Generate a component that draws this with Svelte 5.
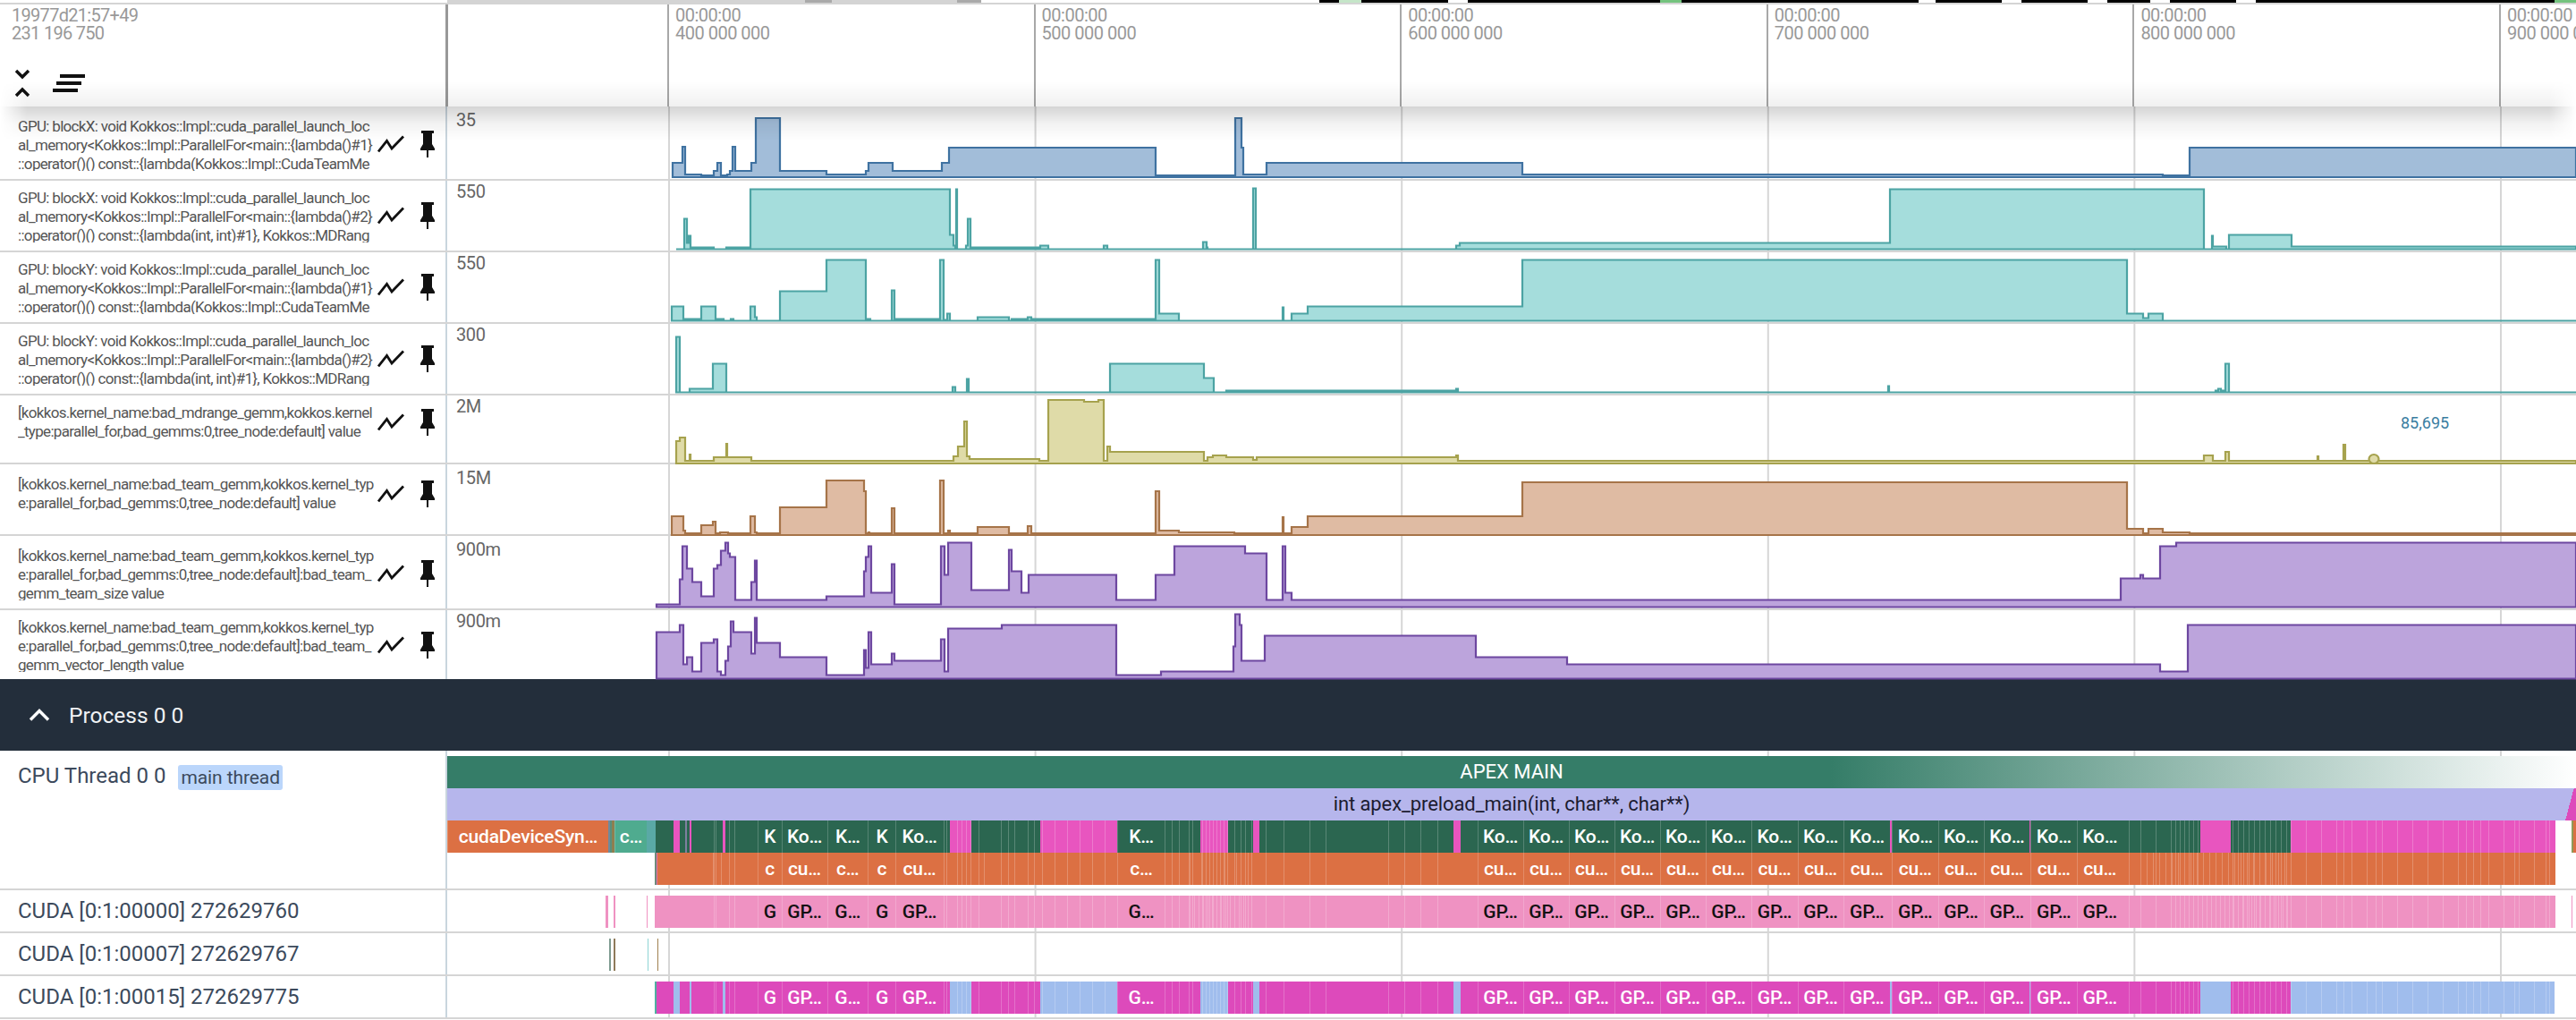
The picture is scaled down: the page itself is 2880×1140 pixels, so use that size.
<script>
	const O = '#dc7043';
	const GREEN = '#2b6650';
	const MAG = '#e855bf';
	const MAG2 = '#dd4abb';
	const PINK = '#ef92c2';
	const BLUE = '#a0bded';

	const charts = [
		{ cls: 'blue', top: 119, h: 83, base: 198, scale: '35', low: true,
			lines: ['GPU: blockX: void Kokkos::Impl::cuda_parallel_launch_loc', 'al_memory<Kokkos::Impl::ParallelFor<main::{lambda()#1}', '::operator()() const::{lambda(Kokkos::Impl::CudaTeamMe'],
			steps: [[752,16],[763,34],[766,3],[784,2],[798,7],[802,16],[806,2],[813,3],[816,7],[819,34],[822,7],[840,16],[845,66],[872,7],[924,3],[968,7],[971,16],[998,7],[1053,16],[1061,33],[1292,2],[1381,66],[1388,33],[1390,3],[1416,16],[1702,3],[2418,2],[2448,33],[2880,0]] },
		{ cls: 'teal', top: 202, h: 80, base: 278.5, scale: '550',
			lines: ['GPU: blockX: void Kokkos::Impl::cuda_parallel_launch_loc', 'al_memory<Kokkos::Impl::ParallelFor<main::{lambda()#2}', '::operator()() const::{lambda(int, int)#1}, Kokkos::MDRang'],
			steps: [[756,0],[765,34],[768,7],[770,15],[772,2],[798,0],[812,2],[839,67],[1062,16],[1066,4],[1068,0],[1069,67],[1070,0],[1080,4],[1082,34],[1085,2],[1163,4],[1172,0],[1234,4],[1238,0],[1345,8],[1349,2],[1350,0],[1401,68],[1404,0],[1628,4],[1632,7],[2113,67],[2464,0],[2473,15],[2474,3],[2489,0],[2492,16],[2562,3],[2880,0]] },
		{ cls: 'teal', top: 282, h: 80, base: 358.5, scale: '550',
			lines: ['GPU: blockY: void Kokkos::Impl::cuda_parallel_launch_loc', 'al_memory<Kokkos::Impl::ParallelFor<main::{lambda()#1}', '::operator()() const::{lambda(Kokkos::Impl::CudaTeamMe'],
			steps: [[751,16],[764,0],[765,2],[767,0],[768,2],[784,16],[800,2],[809,0],[817,2],[820,0],[839,16],[844,4],[846,0],[872,33],[924,68],[968,2],[973,0],[997,34],[1000,2],[1051,68],[1055,1],[1059,8],[1062,0],[1093,4],[1128,0],[1131,2],[1149,4],[1153,2],[1292,68],[1296,8],[1318,0],[1434,15],[1435,0],[1444,8],[1462,16],[1702,68],[2378,8],[2396,3],[2402,8],[2418,0],[2880,0]] },
		{ cls: 'teal', top: 362, h: 80, base: 438.5, scale: '300',
			lines: ['GPU: blockY: void Kokkos::Impl::cuda_parallel_launch_loc', 'al_memory<Kokkos::Impl::ParallelFor<main::{lambda()#2}', '::operator()() const::{lambda(int, int)#1}, Kokkos::MDRang'],
			steps: [[756,62],[760,0],[771,4],[797,32],[812,0],[1065,6],[1068,0],[1081,15],[1083,0],[1241,32],[1346,16],[1357,0],[1371,2],[1628,4],[1630,0],[2111,7],[2112,0],[2477,2],[2480,4],[2483,2],[2488,32],[2492,0],[2880,0]] },
		{ cls: 'olive', top: 442, h: 77, base: 518, scale: '2M',
			lines: ['[kokkos.kernel_name:bad_mdrange_gemm,kokkos.kernel', '_type:parallel_for,bad_gemms:0,tree_node:default] value'],
			steps: [[756,25],[760,29],[766,3],[771,10],[772,3],[798,7],[812,22],[813,7],[840,3],[1066,8],[1071,19],[1078,47],[1081,8],[1084,5],[1162,3],[1172,71],[1212,69],[1228,71],[1234,3],[1238,19],[1241,13],[1346,3],[1350,7],[1356,9],[1371,7],[1401,4],[1405,7],[1628,9],[1630,3],[2464,9],[2474,3],[2488,13],[2492,3],[2591,8],[2592,3],[2620,21],[2622,3],[2880,0]] },
		{ cls: 'brown', top: 519, h: 80, base: 598, scale: '15M', low: true,
			lines: ['[kokkos.kernel_name:bad_team_gemm,kokkos.kernel_typ', 'e:parallel_for,bad_gemms:0,tree_node:default] value'],
			steps: [[751,21],[764,5],[766,2],[784,11],[797,15],[800,2],[805,3],[814,2],[839,21],[844,3],[846,2],[872,31],[924,61],[966,49],[968,2],[971,3],[972,2],[997,30],[1000,2],[1051,61],[1055,2],[1060,5],[1062,2],[1093,9],[1128,2],[1149,10],[1153,2],[1292,49],[1296,5],[1318,3],[1380,2],[1434,20],[1435,2],[1444,9],[1462,21],[1702,59],[2378,7],[2396,2],[2402,7],[2418,3],[2448,2],[2880,0]] },
		{ cls: 'purple', top: 599, h: 83, base: 678.5, scale: '900m', low: true,
			lines: ['[kokkos.kernel_name:bad_team_gemm,kokkos.kernel_typ', 'e:parallel_for,bad_gemms:0,tree_node:default]:bad_team_', 'gemm_team_size value'],
			steps: [[734,3],[760,31],[763,68],[768,43],[774,28],[784,12],[798,43],[802,47],[806,63],[811,72],[814,60],[816,56],[822,8],[840,28],[844,52],[846,8],[924,12],[966,40],[968,56],[971,68],[974,16],[997,48],[1000,3],[1052,68],[1056,36],[1060,72],[1086,19],[1128,64],[1131,40],[1142,16],[1150,36],[1248,8],[1292,36],[1313,68],[1392,60],[1416,8],[1434,68],[1437,16],[1444,8],[2371,32],[2393,36],[2396,32],[2415,68],[2433,72],[2880,0]] },
		{ cls: 'purple', top: 682, h: 77, base: 758.5, scale: '900m', last: true,
			lines: ['[kokkos.kernel_name:bad_team_gemm,kokkos.kernel_typ', 'e:parallel_for,bad_gemms:0,tree_node:default]:bad_team_', 'gemm_vector_length value'],
			steps: [[734,52],[760,60],[764,16],[768,24],[774,8],[784,40],[798,44],[802,8],[806,4],[811,20],[814,36],[817,64],[820,52],[840,28],[844,68],[846,40],[872,24],[924,4],[966,32],[968,12],[971,52],[974,16],[997,28],[1000,20],[1052,44],[1056,8],[1060,56],[1120,60],[1248,4],[1298,8],[1379,36],[1381,72],[1386,60],[1388,20],[1414,48],[1650,24],[1752,16],[2415,8],[2446,60],[2880,0]] }
	];

	function stepPath(c) {
		let d = `M${c.steps[0][0]} ${c.base}`;
		c.steps.forEach(([x, v], i) => {
			const next = c.steps[i + 1];
			if (!next) return;
			d += `L${x} ${c.base - v}L${next[0]} ${c.base - v}`;
		});
		return d + `L2880 ${c.base}Z`;
	}

	const ticks = [400, 500, 600, 700, 800, 900];

	const strip = [
		[500, 900, '#d4d4d4'], [900, 930, '#aaa'], [930, 1070, '#d4d4d4'], [1070, 1097, '#aaa'], [1097, 1475, '#fff'],
		[1475, 1497, '#000'], [1497, 1522, '#c5e5c8'], [1522, 1619, '#000'], [1619, 1641, '#fff'], [1641, 1856, '#000'],
		[1856, 1880, '#74c37e'], [1880, 2145, '#000'], [2145, 2164, '#fff'], [2164, 2238, '#000'], [2238, 2260, '#fff'],
		[2260, 2334, '#000'], [2334, 2356, '#fff'], [2356, 2404, '#000'], [2404, 2426, '#fff'], [2426, 2500, '#000'],
		[2500, 2522, '#fff'], [2522, 2856, '#000'], [2856, 2880, '#74c37e']
	];

	// start, end, label kind
	const slots = [
		[847, 873.5, 0], [873.5, 924.5, 1], [924.5, 970, 2], [970, 1001, 0], [1001, 1054, 1], [1249, 1302, 2],
		[1651.5, 1702.5, 1], [1702.5, 1753.5, 1], [1753.5, 1804.5, 1], [1804.5, 1855.5, 1], [1855.5, 1906.5, 1],
		[1906.5, 1957.5, 1], [1957.5, 2009.5, 1], [2009.5, 2060.5, 1], [2060.5, 2113, 1],
		[2115, 2166.5, 1], [2166.5, 2217.5, 1], [2217.5, 2269, 1], [2270, 2321.5, 1], [2321.5, 2373, 1]
	];
	const named = (names) => slots.map(([a, b, k]) => [a, b, null, names[k]]);
	const gaps = [[753, 760], [771, 773], [808, 811], [1062, 1086], [1163, 1249], [1342, 1373], [1401, 1408], [1625, 1633], [2113, 2115], [2269, 2270], [2460, 2494], [2561, 2857]];

	function span(a, b, step) {
		const out = [];
		for (let x = a; x < b; x += step) out.push(x);
		return out;
	}

	const lines = [
		798, 800, 815, 821, 1055, 1058, 1094, 1119, 1127, 1134, 1149, 1156, 1284, 1302, 1310, 1318, 1329, 1333, 1380, 1387, 1392, 1399,
		1415, 1435, 1464, 1482, 1552, 1570, 1588, 1607, 2380, 2393, 2410, 2620, 2656, 2757, 2773, 2811, 2846,
		...span(1070, 1086, 5), ...span(1165, 1249, 14), ...span(1344, 1373, 4), ...span(2427, 2460, 5), ...span(2496, 2561, 6), ...span(2561, 2857, 17)
	];

	function build(from, to, base, overlays, tickAt = []) {
		const labelled = overlays.filter((o) => o[3]);
		const set = new Set(tickAt.filter((t) => !labelled.some((o) => t >= o[0] && t < o[1])));
		const cuts = new Set([from, to]);
		overlays.forEach(([a, b]) => { cuts.add(a); cuts.add(b); });
		set.forEach((t) => { cuts.add(t); cuts.add(t + 1); });
		const xs = [...cuts].filter((x) => x >= from && x <= to).sort((a, b) => a - b);
		const out = from > 500 ? [{ w: from - 500, c: 'transparent' }] : [];
		for (let i = 0; i < xs.length - 1; i++) {
			const mid = (xs[i] + xs[i + 1]) / 2;
			const hits = overlays.filter((o) => mid >= o[0] && mid < o[1]);
			const colored = hits.filter((o) => o[2]).pop();
			const text = hits.filter((o) => o[3]).pop();
			out.push({
				w: xs[i + 1] - xs[i],
				c: colored ? colored[2] : base,
				label: text ? text[3] : '',
				tick: set.has(xs[i]),
				edge: !!text
			});
		}
		return out;
	}

	const level3 = build(500, 2880, 'transparent', [
		[500, 680, O, 'cudaDeviceSyn…'], [680, 682, '#6f8a9c'], [682, 684, '#5b8f7b'], [684, 687, '#8f7f4f'], [687, 723, '#4fab8f', 'c…'], [723, 733, '#5aa9a6'],
		[733, 2857, GREEN], [766, 768, '#7f7f9f'], ...gaps.map(([a, b]) => [a, b, MAG]), [2875, 2877, '#8f9a5a'], [2877, 2880, O],
		...named(['K', 'Ko…', 'K…'])
	], lines);

	const level4 = build(732, 2857, O, [[732, 734, '#6f8a7a'], [734, 735, '#e26fa8'], ...named(['c', 'cu…', 'c…'])],
		[...lines, 797, 806, 1009, 1100, ...span(1330, 1400, 13), ...span(2400, 2560, 7)]);

	const cuda = [
		{ name: 'CUDA [0:1:00000] 272629760', cls: 'dark',
			track: build(500, 2880, 'transparent', [[677, 680, PINK], [686, 688, PINK], [723, 724, PINK], [732, 2857, PINK], [2875, 2876, PINK], ...named(['G', 'GP…', 'G…'])], [...lines, ...span(1330, 1400, 5), ...span(2427, 2561, 5)]) },
		{ name: 'CUDA [0:1:00007] 272629767', cls: '',
			track: build(500, 2880, 'transparent', [[681, 683, '#7d9a8f'], [686, 688, '#8f7a5a'], [724, 725, '#8fd4d4'], [735, 736, '#a08050']]) },
		{ name: 'CUDA [0:1:00015] 272629775', cls: '',
			track: build(732, 2856, MAG2, [[732, 734, '#4fb0a0'], ...gaps.map(([a, b]) => [a, b, BLUE]), ...named(['G', 'GP…', 'G…'])], lines) }
	];
</script>

<div class="page">
	<header class="top">
		<div class="strip">
			{#each strip as [a, b, color]}
				<span style="width: {b - a}px; background: {color}"></span>
			{/each}
		</div>
		<div class="top-main">
			<div class="top-left">
				<div class="stamp">19977d21:57+49<br />231 196 750</div>
				<div class="tools">
					<svg width="18" height="32" viewBox="0 0 18 32">
						<path d="M2 2l7 7 7-7M2 30l7-7 7 7" fill="none" stroke="#111" stroke-width="3.4" />
					</svg>
					<svg width="36" height="20" viewBox="0 0 36 20">
						<path d="M8 0h28v4H8zM4 8h28v4H4zM0 16h28v4H0z" fill="#111" />
					</svg>
				</div>
			</div>
			<div class="ruler">
				{#each ticks as t}
					<div class="tick">00:00:00<br />{t} 000 000</div>
				{/each}
			</div>
		</div>
	</header>

	{#each charts as c}
		<section class="row" class:low={c.low} class:last={c.last} style="height: {c.h}px">
			<div class="head">
				<div class="head-inner">
					<div class="name">
						{#each c.lines as line}
							<span>{line}</span>
						{/each}
					</div>
					<svg class="zig" width="30" height="20" viewBox="0 0 30 20">
						<path d="M1 18.5L10.500 6.500L16 15L29 1.500" fill="none" stroke="#111" stroke-width="2.800" />
					</svg>
					<svg class="pin" width="18" height="30" viewBox="0 0 18 30">
						<path d="M2 0H16V3H14V15L17 20V22H10V30H8V22H1V20L4 15V3H2Z" fill="#111" />
					</svg>
				</div>
			</div>
			<div class="grid">
				<span class="scale">{c.scale}</span>
				<svg class="plot {c.cls}" width="2380" height={c.last ? c.h : c.h - 2} viewBox="500 {c.top} 2380 {c.last ? c.h : c.h - 2}">
					<path d={stepPath(c)} />
					{#if c.cls === 'olive'}
						<ellipse cx="2654" cy="513" rx="5.500" ry="5" />
					{/if}
				</svg>
				{#if c.cls === 'olive'}
					<span class="hover">85,695</span>
				{/if}
			</div>
		</section>
	{/each}

	<section class="process">
		<svg width="24" height="14" viewBox="0 0 24 14">
			<path d="M2 12.500L12 2.500l10 10" fill="none" stroke="#fff" stroke-width="3.400" />
		</svg>
		<span>Process 0 0</span>
	</section>

	<section class="thread">
		<div class="thread-head">
			<span class="label">CPU Thread 0 0</span>
			<span class="chip">main thread</span>
		</div>
		<div class="grid flame">
			<div class="bar apex">APEX MAIN</div>
			<div class="bar preload">int apex_preload_main(int, char**, char**)</div>
			<div class="track">
				{#each level3 as s}
					<div class="slice" class:tick-line={s.tick} class:edge={s.edge} style="flex-basis: {s.w}px; background-color: {s.c}">{s.label}</div>
				{/each}
			</div>
			<div class="track">
				{#each level4 as s}
					<div class="slice" class:tick-line={s.tick} class:edge={s.edge} style="flex-basis: {s.w}px; background-color: {s.c}">{s.label}</div>
				{/each}
			</div>
		</div>
	</section>

	{#each cuda as r}
		<section class="cuda">
			<div class="cuda-head"><span class="label">{r.name}</span></div>
			<div class="grid cuda-track">
				<div class="track" class:dark={r.cls === 'dark'}>
					{#each r.track as s}
						<div class="slice" class:tick-line={s.tick} class:edge={s.edge} style="flex-basis: {s.w}px; background-color: {s.c}">{s.label}</div>
					{/each}
				</div>
			</div>
		</section>
	{/each}
</div>

<style>
	:global(body) {
		margin: 0;
		background: #fff;
	}

	.page {
		width: 2880px;
		height: 1140px;
		overflow: hidden;
		font-family: Roboto, 'Liberation Sans', sans-serif;
	}

	.top {
		position: relative;
		z-index: 2;
		height: 119px;
		background: #fff;
		box-sizing: border-box;
	}

	.top::before {
		content: '';
		position: absolute;
		left: 0;
		right: 0;
		bottom: 0;
		height: 28px;
		background: linear-gradient(rgba(0, 0, 0, 0), rgba(0, 0, 0, 0.06));
		mask-image: linear-gradient(90deg, transparent, #000 30px, #000 calc(100% - 30px), transparent);
		pointer-events: none;
	}

	/* shadow the ruler throws on the rows */
	.top::after {
		content: '';
		position: absolute;
		left: 0;
		right: 0;
		top: 100%;
		height: 38px;
		background: linear-gradient(rgba(0, 0, 0, 0.17), rgba(0, 0, 0, 0.05) 50%, rgba(0, 0, 0, 0));
		mask-image: linear-gradient(90deg, transparent, #000 30px, #000 calc(100% - 30px), transparent);
		pointer-events: none;
	}

	.strip {
		display: flex;
		height: 3px;
		padding-left: 500px;
		border-bottom: 2px solid #d4d4d4;
	}

	.strip span {
		flex: none;
		height: 3px;
	}

	.top-main {
		display: flex;
		height: 114px;
	}

	.top-left {
		flex: none;
		width: 501px;
		box-sizing: border-box;
		padding: 2px 0 0 13px;
		border-right: 3px solid #999;
	}

	.stamp {
		font-size: 20px;
		line-height: 20px;
		letter-spacing: -0.7px;
		color: #999;
		height: 40px;
	}

	.tools {
		display: flex;
		align-items: center;
		gap: 25px;
		margin: 30px 0 0 3px;
	}

	.tools svg {
		display: block;
	}

	.ruler {
		flex: 1;
		display: flex;
		padding-left: 245px;
		min-width: 0;
		overflow: hidden;
	}

	.tick {
		flex: 0 0 409.6px;
		box-sizing: border-box;
		padding: 2px 0 0 7px;
		border-left: 2px solid #a8a8a8;
		font-size: 20px;
		line-height: 20px;
		letter-spacing: -0.5px;
		color: #999;
		white-space: nowrap;
	}

	/* chart rows */
	.row {
		display: flex;
		box-sizing: border-box;
		border-bottom: 2px solid #d5d5d5;
	}

	.row.last {
		border-bottom: none;
	}

	.head {
		flex: none;
		width: 500px;
		box-sizing: border-box;
		padding: 9px 0 0 20px;
		border-right: 2px solid #c9d5de;
	}

	.low .head {
		padding-top: 12px;
	}

	.head-inner {
		display: flex;
		align-items: center;
	}

	.name {
		flex: none;
		width: 402px;
		max-height: 60px;
		overflow: hidden;
		font-size: 17px;
		line-height: 21px;
		letter-spacing: -0.68px;
		color: #555;
	}

	.name span {
		display: block;
		white-space: nowrap;
	}

	.zig {
		flex: none;
		margin-right: 17px;
	}

	.pin {
		flex: none;
	}

	.grid {
		position: relative;
		flex: 1;
		min-width: 0;
		background: linear-gradient(90deg, #d6d6d6 2px, transparent 2px) 247px 0 / 409.6px 100% repeat-x;
	}

	.scale {
		position: absolute;
		left: 10px;
		top: 1px;
		font-size: 20px;
		line-height: 22px;
		letter-spacing: -0.4px;
		color: #666;
	}

	.low .scale {
		top: 4px;
	}

	.plot {
		display: block;
		overflow: visible;
	}

	.plot path,
	.plot ellipse {
		stroke-width: 2.2;
	}

	.blue {
		fill: #a2bdd9;
		stroke: #3f72a1;
	}

	.teal {
		fill: #a5dddc;
		stroke: #4ca3a3;
	}

	.olive {
		fill: #dfdba8;
		stroke: #a6a24e;
	}

	.brown {
		fill: #dfbba3;
		stroke: #a67449;
	}

	.purple {
		fill: #bca4dc;
		stroke: #6d47a0;
	}

	.hover {
		position: absolute;
		left: 2184px;
		top: 20px;
		font-size: 18px;
		line-height: 22px;
		color: #3a7ea1;
	}

	/* process */
	.process {
		display: flex;
		align-items: center;
		gap: 21px;
		height: 80px;
		box-sizing: border-box;
		padding-left: 32px;
		background: #232e3b;
		color: #f0f2f4;
		font-size: 24.5px;
	}

	.thread {
		display: flex;
		height: 156px;
		box-sizing: border-box;
		border-bottom: 2px solid #d5d5d5;
	}

	.thread-head,
	.cuda-head {
		flex: none;
		width: 500px;
		box-sizing: border-box;
		padding-left: 20px;
		border-right: 2px solid #c9d5de;
		display: flex;
		align-items: center;
		gap: 14px;
	}

	.thread-head {
		align-items: flex-start;
		padding-top: 14px;
	}

	.label {
		font-size: 24px;
		line-height: 28px;
		color: #3c4a5c;
		white-space: nowrap;
	}

	.chip {
		padding: 0 3px;
		margin-top: 2px;
		font-size: 21px;
		line-height: 28px;
		letter-spacing: -0.1px;
		color: #3c4a5c;
		background: #bbd6fb;
		border-radius: 3px;
		white-space: nowrap;
	}

	.flame {
		padding-top: 6px;
	}

	.bar {
		height: 36px;
		line-height: 36px;
		text-align: center;
		font-size: 22px;
		white-space: nowrap;
	}

	.apex {
		color: #fff;
		background: linear-gradient(90deg, #357d68 65%, #fff 100%);
	}

	.preload {
		color: #1c1c30;
		letter-spacing: -0.1px;
		background: linear-gradient(105deg, #b6b6ec 99.5%, #dd4abb 99.5%);
	}

	.track {
		display: flex;
		height: 36px;
	}

	.slice {
		flex: none;
		height: 36px;
		box-sizing: border-box;
		overflow: hidden;
		text-align: center;
		font-size: 21px;
		font-weight: 500;
		letter-spacing: -0.2px;
		line-height: 36px;
		color: #fff;
		white-space: nowrap;
	}

	.slice.edge {
		border-left: 1px solid rgba(255, 255, 255, 0.2);
	}

	.slice.tick-line {
		background-image: linear-gradient(rgba(255, 255, 255, 0.22), rgba(255, 255, 255, 0.22));
	}

	.track.dark .slice {
		color: #111;
	}

	.cuda {
		display: flex;
		height: 48px;
		box-sizing: border-box;
		border-bottom: 2px solid #d5d5d5;
	}

	.cuda-track {
		padding-top: 6px;
	}
</style>
